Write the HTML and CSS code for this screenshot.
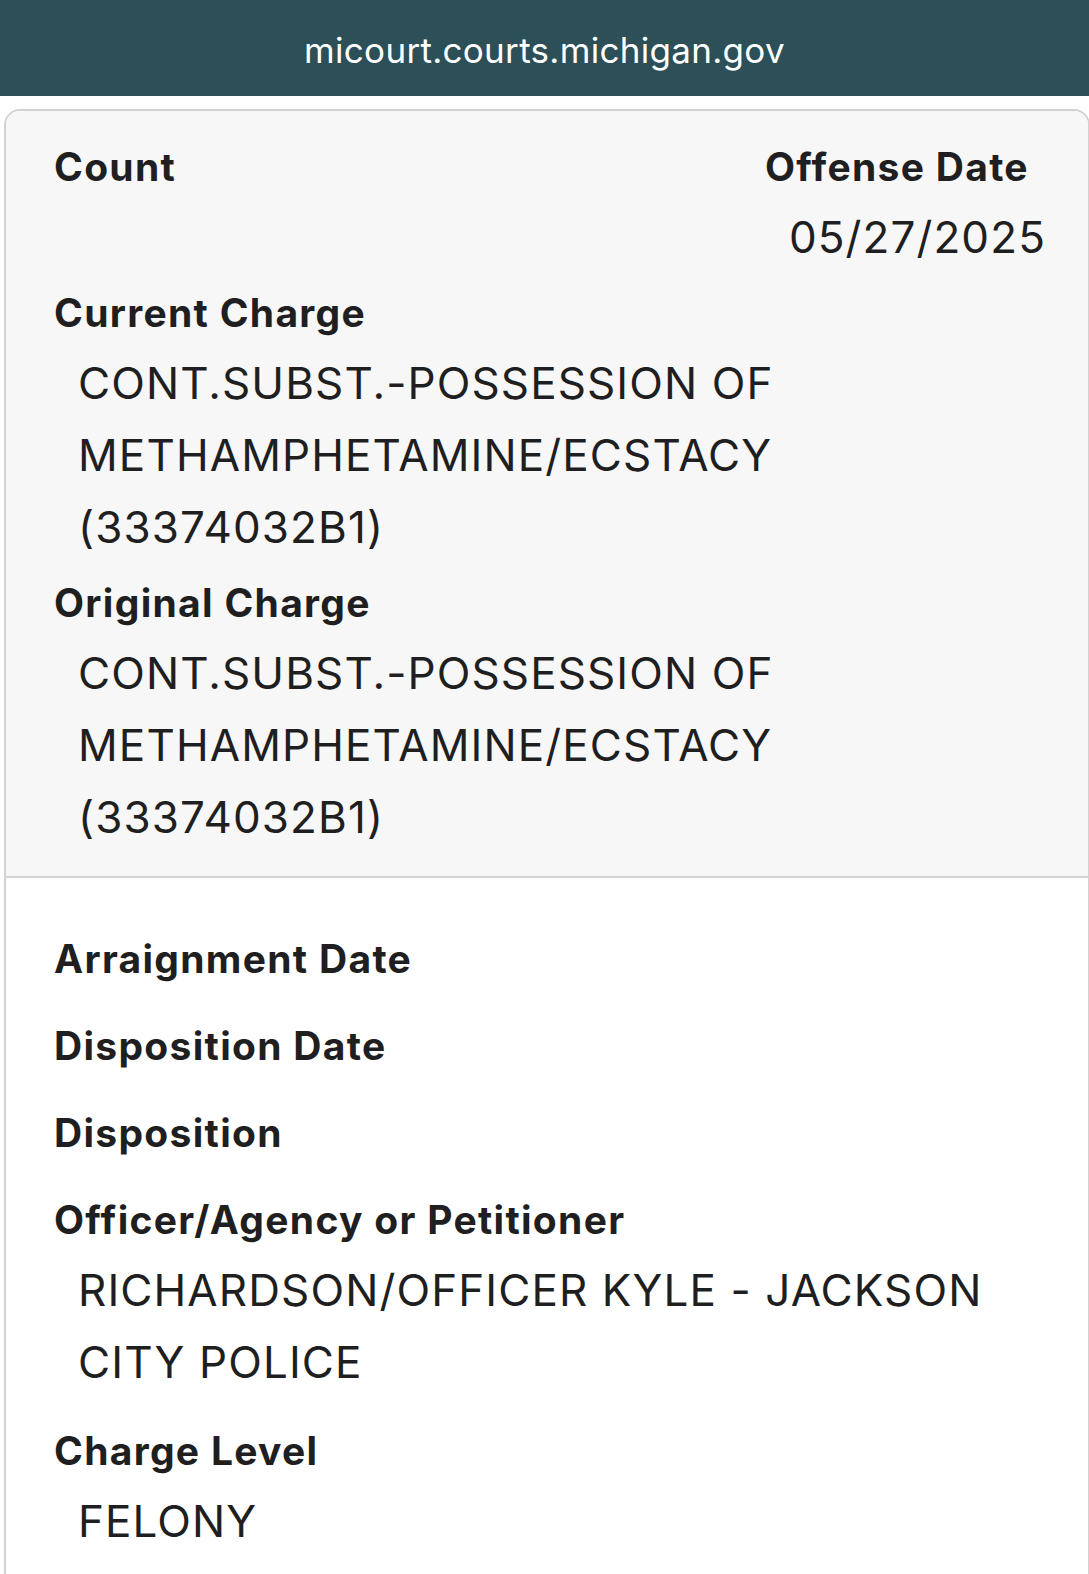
FILE: index.html
```html
<!DOCTYPE html>
<html lang="en">
<head>
    <meta charset="UTF-8">
    <meta name="viewport" content="width=device-width, initial-scale=1.0">
    <title>Case Charge Details</title>
    <link rel="stylesheet" href="styles.css">
</head>
<body>
    <div class="url-bar">micourt.courts.michigan.gov</div>

    <div class="charge-card">
        <div class="charge-summary">
            <div class="row-split">
                <div class="field">
                    <div class="label">Count</div>
                </div>
                <div class="field">
                    <div class="label">Offense Date</div>
                    <div class="value">05/27/2025</div>
                </div>
            </div>
            <div class="field">
                <div class="label">Current Charge</div>
                <div class="value">CONT.SUBST.-POSSESSION OF<br>METHAMPHETAMINE/ECSTACY<br>(33374032B1)</div>
            </div>
            <div class="field">
                <div class="label">Original Charge</div>
                <div class="value">CONT.SUBST.-POSSESSION OF<br>METHAMPHETAMINE/ECSTACY<br>(33374032B1)</div>
            </div>
        </div>

        <div class="charge-details">
            <div class="field">
                <div class="label">Arraignment Date</div>
                <div class="value"></div>
            </div>
            <div class="field">
                <div class="label">Disposition Date</div>
                <div class="value"></div>
            </div>
            <div class="field">
                <div class="label">Disposition</div>
                <div class="value"></div>
            </div>
            <div class="field">
                <div class="label">Officer/Agency or Petitioner</div>
                <div class="value">RICHARDSON/OFFICER KYLE - JACKSON<br>CITY POLICE</div>
            </div>
            <div class="field">
                <div class="label">Charge Level</div>
                <div class="value">FELONY</div>
            </div>
        </div>
    </div>
</body>
</html>
```

FILE: styles.css
```css
body {
    margin: 0;
    font-family: Inter, "Noto Sans", sans-serif;
    color: #1f1f21;
    background-color: #ffffff;
    overflow: hidden;
}
.url-bar {
    height: 96px;
    background-color: #2c4f58;
    color: #ffffff;
    font-size: 35px;
    line-height: 100px;
    text-align: center;
    letter-spacing: 0.3px;
}
.charge-card {
    margin: 13px -1px 0 4px;
    border: 2px solid #d2d2d2;
    border-radius: 16px 16px 0 0;
    overflow: hidden;
}
.charge-summary {
    background-color: #f7f7f8;
    padding: 31px 42px 23px 48px;
    border-bottom: 2px solid #d4d4d4;
    display: flex;
    flex-direction: column;
    gap: 15px;
}
.charge-details {
    background-color: #ffffff;
    padding: 56px 42px 40px 48px;
    display: flex;
    flex-direction: column;
    gap: 28px;
}
.row-split {
    display: flex;
    justify-content: space-between;
}
.label {
    font-size: 39px;
    font-weight: 700;
    line-height: 50px;
    letter-spacing: 1.3px;
}
.value {
    margin-top: 9px;
    padding-left: 24px;
    font-size: 44px;
    line-height: 72px;
    letter-spacing: 1.1px;
}
```
